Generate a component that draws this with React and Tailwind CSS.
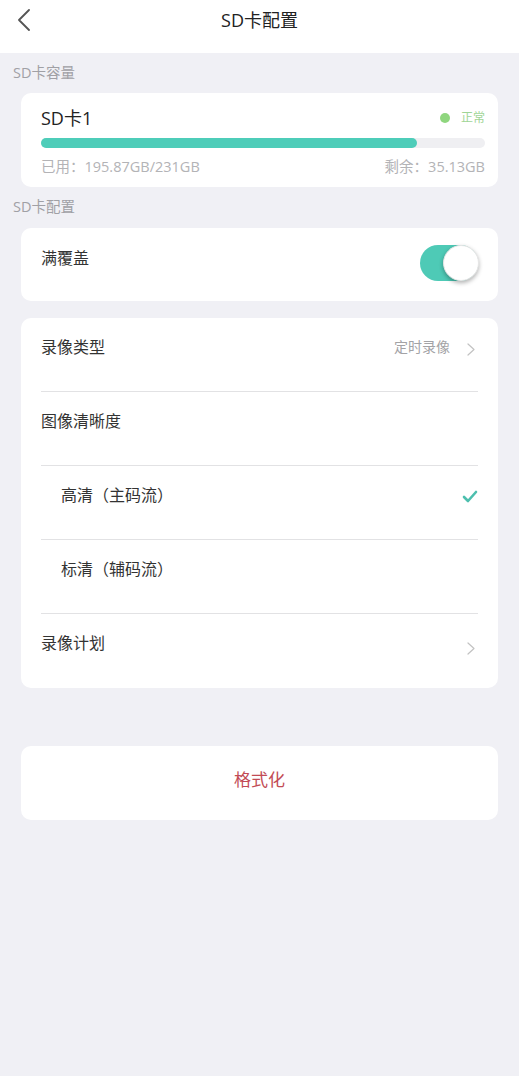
import { useState } from "react";

const font = { fontFamily: '"Open Sans", "Noto Sans CJK SC", sans-serif' };

function Chevron({ className = "" }) {
  return (
    <svg width="8" height="13" viewBox="0 0 8 13" fill="none" className={className}>
      <path d="M1 1l6 5.5L1 12" stroke="#c2c2c2" strokeWidth="1.2" strokeLinecap="round" strokeLinejoin="round" />
    </svg>
  );
}

function Check() {
  return (
    <svg width="16" height="13" viewBox="0 0 16 13" className="mt-[7px]" fill="none">
      <path d="M2 7l4 4 8-9" stroke="#4dbfae" strokeWidth="2.6" strokeLinecap="round" strokeLinejoin="round" />
    </svg>
  );
}

function Row({ label, indent, right, last }) {
  return (
    <div className="mx-[20px]">
      <div className={`flex h-[73px] items-start justify-between pt-[17px] ${indent ? "pl-[20px]" : ""}`}>
        <span className="text-[16px] leading-[24px] text-[#333]">{label}</span>
        {right}
      </div>
      {!last && <div className="h-px bg-[#e2e2e4]" />}
    </div>
  );
}

export default function App() {
  const [on, setOn] = useState(true);
  const [quality, setQuality] = useState("main");

  return (
    <div className="min-h-[1076px] bg-[#f0f0f5]" style={font}>
      <header className="relative flex h-[53px] items-center justify-center bg-white pb-[14px]">
        <button className="absolute left-[17px] top-[9px]">
          <svg width="14" height="22" viewBox="0 0 14 22" fill="none">
            <path d="M12 1L2 11l10 10" stroke="#555" strokeWidth="1.8" strokeLinecap="round" strokeLinejoin="round" />
          </svg>
        </button>
        <h1 className="text-[18px] leading-[24px] text-[#222]">SD卡配置</h1>
      </header>

      <p className="px-[13px] pt-[10px] text-[14.5px] leading-[20px] text-[#a0a0a5]">SD卡容量</p>
      <section className="mx-[21px] mt-[10px] rounded-[10px] bg-white pb-[10px] pl-[20px] pr-[13px] pt-[13px]">
        <div className="flex items-center justify-between">
          <span className="text-[18px] leading-[24px] text-[#222]">SD卡1</span>
          <span className="flex items-center gap-[11px] text-[12px] leading-[18px] text-[#9fd596]">
            <span className="h-[10px] w-[10px] rounded-full bg-[#8fd67e]" />
            正常
          </span>
        </div>
        <div className="mt-[8px] h-[10px] rounded-full bg-[#efeff2]">
          <div className="h-full rounded-full bg-[#4ecdb9]" style={{ width: `${(195.87 / 231) * 100}%` }} />
        </div>
        <div className="mt-[9px] flex justify-between text-[14.5px] leading-[20px] text-[#b3b3b6]">
          <span>已用：195.87GB/231GB</span>
          <span>剩余：35.13GB</span>
        </div>
      </section>

      <p className="px-[13px] pt-[10px] text-[14.5px] leading-[20px] text-[#a0a0a5]">SD卡配置</p>
      <section className="mx-[21px] mt-[11px] flex h-[73px] items-start justify-between rounded-[10px] bg-white pl-[20px] pr-[20px] pt-[17px]">
        <span className="pt-[1px] text-[16px] leading-[24px] text-[#333]">满覆盖</span>
        <button
          onClick={() => setOn((v) => !v)}
          className={`relative h-[36px] w-[58px] rounded-full ${on ? "bg-[#4ecab6]" : "bg-[#e3e3e6]"}`}
        >
          <span
            className={`absolute top-0 h-[36px] w-[36px] rounded-full border border-[#e6e6e6] bg-white shadow-[0_2px_4px_rgba(0,0,0,0.3)] ${on ? "left-[23px]" : "left-0"}`}
          />
        </button>
      </section>

      <section className="mx-[21px] mt-[17px] rounded-[10px] bg-white">
        <Row
          label="录像类型"
          right={
            <span className="flex items-start gap-[17px]">
              <span className="text-[14px] leading-[24px] text-[#a3a3a6]">定时录像</span>
              <Chevron className="mr-[3px] mt-[8px]" />
            </span>
          }
        />
        <Row label="图像清晰度" />
        <div onClick={() => setQuality("main")}>
          <Row label="高清（主码流）" indent right={quality === "main" && <Check />} />
        </div>
        <div onClick={() => setQuality("sub")}>
          <Row label="标清（辅码流）" indent right={quality === "sub" && <Check />} />
        </div>
        <div className="h-[74px]">
          <Row label="录像计划" last right={<Chevron className="mr-[3px] mt-[11px]" />} />
        </div>
      </section>

      <section className="mx-[21px] mt-[58px] flex h-[74px] items-center justify-center rounded-[10px] bg-white pb-[6px]">
        <button className="text-[17px] leading-[24px] text-[#c24b55]">格式化</button>
      </section>
    </div>
  );
}
